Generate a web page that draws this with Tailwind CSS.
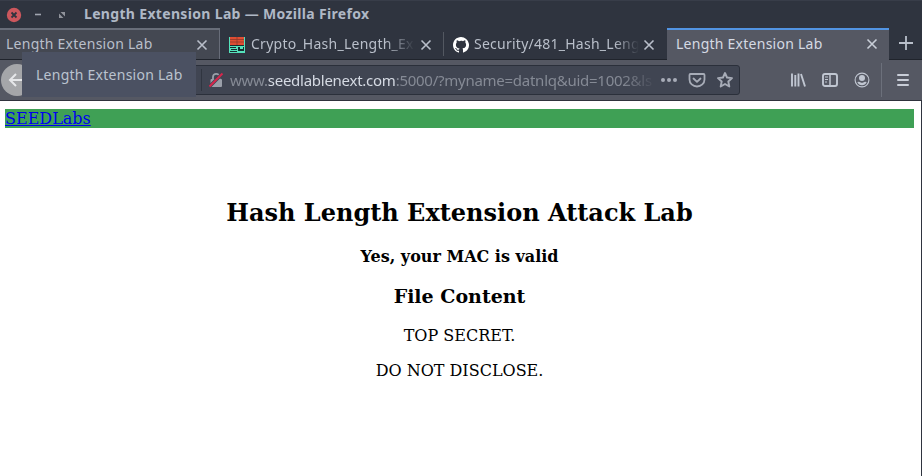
<!DOCTYPE html>
<html lang="en">
<head>
<meta charset="utf-8">
<title>Length Extension Lab</title>
<script src="https://cdn.jsdelivr.net/npm/@tailwindcss/browser@4"></script>
</head>
<body class="relative w-[922px] h-[476px] overflow-hidden bg-white font-['Noto_Sans',sans-serif] flex flex-col">
<header class="w-full h-7 shrink-0 bg-[#2f343f] border-t border-[#383d49] flex items-center">
  <svg class="ml-[6px] w-4 h-4" viewBox="0 0 16 16"><circle cx="8" cy="8" r="7.2" fill="#cc575d"/><path d="M5.5 5.5l5 5M10.5 5.5l-5 5" stroke="#2f343f" stroke-width="1.8"/></svg>
  <svg class="ml-2 w-4 h-4" viewBox="0 0 16 16"><path d="M5 7.5h6" stroke="#a0a5b0" stroke-width="1.6"/></svg>
  <svg class="ml-2 w-4 h-4" viewBox="0 0 16 16"><path d="M6.500 5h4.500v4.500zM5 6.500v4.500h4.500z" fill="#90939b"/></svg>
  <h1 class="ml-[14px] -mt-[2px] text-[14px] leading-5 tracking-[0.33px] font-bold text-[#afb8c6] whitespace-nowrap">Length Extension Lab — Mozilla Firefox</h1>
</header>
<nav class="h-8 shrink-0 flex bg-[#2f343f] border-b border-[#20242c] text-[#b9bfca] text-[14px] leading-5 tracking-[0.25px]">
  <div class="w-[220px] flex items-center border-t-2 border-r border-[#686d79] bg-[#444852] pl-[6px]"><span class="flex-1 -mt-[2px] whitespace-nowrap">Length Extension Lab</span><svg class="w-3 h-3 mr-[11px]" viewBox="0 0 12 12"><path d="M1.5 1.500l9 9M10.500 1.500l-9 9" stroke="#b9bfca" stroke-width="1.6"/></svg></div>
  <div class="w-[223px] flex items-center pt-[2px] pl-[9px]">
    <svg class="w-4 h-4 mr-[6px]" viewBox="0 0 16 16"><path fill="#55e2bb" d="M0 0h16v16H0z"/><path fill="#df4d32" d="M1 0h14v8H1z"/><path d="M8 0v8M1 2.500h14M1 5h14" fill="none" stroke="#8f3a2c" stroke-width=".8"/><path fill="#182c30" d="M1 8h14v1H1zM1 10h6v1H1zM2 12h6v1H2zM1 14h7v1H1zM9 10h2v2h3v-2h1v4H9z"/></svg>
    <span class="w-[164px] -mt-[2px] overflow-hidden whitespace-nowrap mask-r-from-82% mask-r-to-100%">Crypto_Hash_Length_Ex</span>
    <svg class="w-3 h-3 ml-[5px]" viewBox="0 0 12 12"><path d="M1.500 1.500l9 9M10.500 1.500l-9 9" stroke="#b9bfca" stroke-width="1.6"/></svg>
  </div>
  <div class="w-[224px] flex items-center pt-[2px] pl-[10px] relative">
    <i class="absolute left-0 top-1 h-6 w-px bg-[#535861]"></i>
    <svg class="w-4 h-4 mr-[5px]" viewBox="0 0 16 16" fill="#fff"><path d="M8 0C3.58 0 0 3.58 0 8c0 3.54 2.29 6.53 5.47 7.59.4.07.55-.17.55-.38 0-.19-.01-.82-.01-1.49-2.01.37-2.53-.49-2.69-.94-.09-.23-.48-.94-.82-1.13-.28-.15-.68-.52-.01-.53.63-.01 1.08.58 1.23.82.72 1.21 1.87.87 2.33.66.07-.52.28-.87.51-1.07-1.78-.2-3.64-.89-3.64-3.95 0-.87.31-1.59.82-2.15-.08-.2-.36-1.02.08-2.12 0 0 .67-.21 2.2.82A7.6 7.6 0 0 1 8 3.86c.68 0 1.36.09 2 .27 1.53-1.04 2.2-.82 2.2-.82.44 1.1.16 1.92.08 2.12.51.56.82 1.27.82 2.15 0 3.07-1.87 3.75-3.65 3.95.29.25.54.73.54 1.48 0 1.07-.01 1.93-.01 2.2 0 .21.15.46.55.38A8 8 0 0 0 8 0z"/></svg>
    <span class="w-[165px] -mt-[2px] overflow-hidden whitespace-nowrap mask-r-from-85% mask-r-to-100%">Security/481_Hash_Leng</span>
    <svg class="w-3 h-3 ml-[4px]" viewBox="0 0 12 12"><path d="M1.500 1.500l9 9M10.500 1.500l-9 9" stroke="#b9bfca" stroke-width="1.6"/></svg>
  </div>
  <div class="w-[222px] h-8 flex items-center border-t-2 border-t-[#5294e2] bg-[#555863] pl-[9px] pb-[2px] text-[#d5dae3]"><span class="flex-1 -mt-[1px] whitespace-nowrap">Length Extension Lab</span><svg class="w-3 h-3 mr-[11px]" viewBox="0 0 12 12"><path d="M1.500 1.500l9 9M10.500 1.500l-9 9" stroke="#c9ced8" stroke-width="1.6"/></svg></div>
  <div class="flex-1 flex items-center pl-[9px]"><svg class="w-4 h-4 -mt-[2px]" viewBox="0 0 16 16"><path d="M8 1v14M1 8h14" stroke="#b9bfca" stroke-width="1.8"/></svg></div>
</nav>
<section class="h-[41px] shrink-0 bg-[#555863] border-b border-[#2f333d] flex items-center">
  <div class="ml-[1px] w-8 h-8 rounded-full bg-[#a5a6a9] shrink-0 flex items-center justify-center"><svg class="w-4 h-4 -ml-[2px]" viewBox="0 0 16 16"><path d="M15 8H2M8 2L2 8l6 6" fill="none" stroke="#e6e7e9" stroke-width="2"/></svg></div>
  <div class="ml-[147px] w-[560px] h-[30px] bg-[#404552] border border-[#2b303b] rounded-[3px] flex items-center text-[#b0b6c2]">
    <i class="ml-[20px] h-[22px] w-px bg-[#303540]"></i>
    <svg class="ml-[6px] w-4 h-4 shrink-0" viewBox="0 0 16 16"><path d="M5 7.500V5a3.200 3.200 0 0 1 6.400 0v2.500" fill="none" stroke="#9a9fa9" stroke-width="1.800"/><rect x="2.500" y="7" width="11.500" height="8" rx="1" fill="#9a9fa9"/><path d="M1.500 14.500L14.500 1.500" stroke="#404552" stroke-width="3.400"/><path d="M1.500 14.500L14.500 1.500" stroke="#d7264c" stroke-width="2"/></svg>
    <p class="ml-[6px] w-[426px] text-[15px] leading-5 tracking-[-0.26px] text-[#858a95] whitespace-nowrap overflow-hidden mask-r-from-92% mask-r-to-100%">www.<span class="text-[#d5dae3]">seedlablenext.com</span>:5000/?myname=datnlq&amp;uid=1002&amp;ls</p>
    <svg class="ml-[4px] w-[18px] h-4 shrink-0" viewBox="0 0 18 16" fill="#a7acb7"><circle cx="3" cy="8" r="2"/><circle cx="9" cy="8" r="2"/><circle cx="15" cy="8" r="2"/></svg>
    <svg class="ml-[10px] w-[18px] h-4 shrink-0" viewBox="0 0 18 16" fill="none" stroke="#a7acb7" stroke-width="1.800" stroke-linejoin="round" stroke-linecap="round"><path d="M2.500 2h13q1 0 1 1v4.500a7.500 7 0 0 1-15 0V3q0-1 1-1zM5.500 6.500L9 9.800l3.500-3.300"/></svg>
    <svg class="ml-[11px] w-4 h-4 shrink-0" viewBox="0 0 16 16" fill="none" stroke="#a7acb7" stroke-width="1.900" stroke-linejoin="round"><path d="M8 1l2 4.500 5 .6-3.700 3.400 1 5L8 12l-4.300 2.500 1-5L1 6.100l5-.6z"/></svg>
  </div>
  <svg class="ml-[50px] w-4 h-4 shrink-0" viewBox="0 0 16 16" stroke="#c0c6d1" stroke-width="1.900"><path d="M2 1.500v13M5.300 3v11.500M8.500 1.500v13M11 2l4 12.500"/></svg>
  <svg class="ml-4 w-4 h-4 shrink-0" viewBox="0 0 16 16" fill="none" stroke="#c0c6d1"><rect x="1" y="2" width="14" height="12" rx="2" stroke-width="1.900"/><path d="M8 2v12" stroke-width="1.500"/><path d="M3 5h3M3 7.500h3M3 10h2" stroke-width="1.100"/></svg>
  <svg class="ml-4 w-4 h-4 shrink-0" viewBox="0 0 16 16"><circle cx="8" cy="8" r="6.900" fill="none" stroke="#c0c6d1" stroke-width="1.100"/><circle cx="8" cy="6" r="3" fill="#c0c6d1"/><path d="M3.300 10q2-.8 3 .2 1.700 1.200 3.400 0 1-1 3-.2-1.500 3.300-4.700 3.300T3.300 10z" fill="#c0c6d1"/></svg>
  <i class="ml-[11px] h-[34px] w-px bg-[#6c707b] shrink-0"></i>
  <svg class="ml-[13px] w-4 h-4 shrink-0" viewBox="0 0 16 16"><path d="M3 3h10M3 8h10M3 13h10" stroke="#c8cdd7" stroke-width="2" stroke-linecap="round"/></svg>
</section>
<div class="absolute left-[22px] top-[52px] w-[174px] h-[45px] bg-[#4b5162] flex items-center pl-[14px] text-[14px] tracking-[0.25px] text-[#bac3cf] whitespace-nowrap">Length Extension Lab</div>
<main class="flex-1 border-r border-[#2f343f] pt-2 pl-[5px] pr-[7px] font-['DejaVu_Serif',serif] text-[16px] leading-[19px] text-black">
  <div class="h-[19px] bg-[#3fa055]"><a class="text-[#0000ee] underline" href="#">SEEDLabs</a></div>
  <article class="text-center pt-[71px]">
    <h2 class="text-[24px] leading-[28px] font-bold">Hash Length Extension Attack Lab</h2>
    <p class="mt-5 font-bold">Yes, your MAC is valid</p>
    <h3 class="mt-[19px] text-[19px] leading-[22px] font-bold">File Content</h3>
    <p class="mt-[19px]">TOP SECRET.</p>
    <p class="mt-4">DO NOT DISCLOSE.</p>
  </article>
</main>
</body>
</html>
